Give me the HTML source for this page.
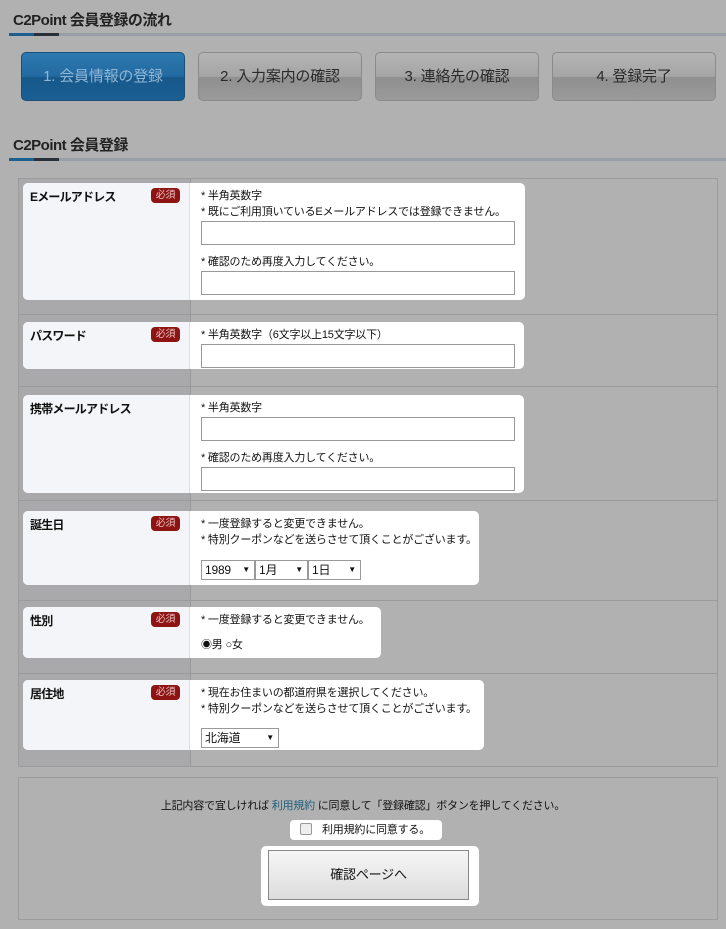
<!DOCTYPE html>
<html><head><meta charset="utf-8"><style>
*{margin:0;padding:0;box-sizing:border-box}
body{width:726px;height:929px;background:#b1b1b1;font-family:"Liberation Sans","Noto Sans CJK JP",sans-serif;font-size:11px;letter-spacing:-0.2px;color:#111;position:relative;overflow:hidden;white-space:nowrap}
.a{position:absolute}
h2{position:absolute;left:13px;font-size:15px;font-weight:bold;color:#222;letter-spacing:-0.5px}
.bar{position:absolute;left:9px;right:0;height:3px;background:#9a9ea6}
.bar:before{content:"";position:absolute;left:0;width:25px;height:3px;background:#1b5f8e}
.bar:after{content:"";position:absolute;left:25px;width:25px;height:3px;background:#2a2f3c}
.step{position:absolute;top:52px;width:164px;height:49px;border-radius:5px;border:1px solid #8a8a8a;background:linear-gradient(#b4b4b4,#a5a5a5 50%,#8f8f8f 52%,#9a9a9a);text-align:center;line-height:48px;font-size:15px;color:#2a2a2a}
.step.on{background:linear-gradient(#2d79b0,#236aa0 50%,#16588a 52%,#1b5f93);border-color:#1a4f78;color:#8fb6d6}
.tbl{position:absolute;left:18px;top:178px;width:700px;height:589px;border:1px solid #9c9c9c}
.lc{position:absolute;left:0;top:0;width:172px;height:100%;background:#a9a9ac;border-right:1px solid #999}
.line{position:absolute;left:0;right:0;height:1px;background:#9a9a9a}
.box{position:absolute;left:23px;border-radius:5px;background:#fff;overflow:hidden}
.box .l{position:absolute;left:0;top:0;bottom:0;width:167px;background:#f4f5f9;border-right:1px solid #dde}
.box .t{position:absolute;left:7px;top:5px;font-weight:bold;font-size:12px;letter-spacing:-0.8px}
.req{position:absolute;left:128px;top:5px;width:29px;height:15px;border-radius:4px;background:#8e1414;color:#e8c0c0;font-size:10px;text-align:center;line-height:15px}
.r{position:absolute;left:178px;top:5px;line-height:16px}
.in{width:314px;height:24px;border:1px solid #999;background:#fff;margin-top:1px}
.sel{display:inline-block;height:20px;border:1px solid #999;background:#fff;font-size:12px;line-height:18px;padding-left:3px;position:relative;vertical-align:top}
.sel:after{content:"▼";position:absolute;right:4px;top:0;font-size:8px}
</style></head><body>
<h2 style="top:9px">C2Point 会員登録の流れ</h2>
<div class="bar" style="top:33px"></div>
<div class="step on" style="left:21px">1. 会員情報の登録</div>
<div class="step" style="left:198px">2. 入力案内の確認</div>
<div class="step" style="left:375px">3. 連絡先の確認</div>
<div class="step" style="left:552px">4. 登録完了</div>
<h2 style="top:134px">C2Point 会員登録</h2>
<div class="bar" style="top:158px"></div>
<div class="tbl"><div class="lc"></div>
<div class="line" style="top:135px"></div><div class="line" style="top:207px"></div><div class="line" style="top:321px"></div><div class="line" style="top:421px"></div><div class="line" style="top:494px"></div>
</div>
<div class="box" style="top:183px;width:502px;height:117px"><div class="l"></div><div class="t">Eメールアドレス</div><div class="req">必須</div>
<div class="r">* 半角英数字<br>* 既にご利用頂いているEメールアドレスでは登録できません。<div class="in"></div><div style="margin-top:9px">* 確認のため再度入力してください。</div><div class="in"></div></div></div>
<div class="box" style="top:322px;width:501px;height:47px"><div class="l"></div><div class="t">パスワード</div><div class="req">必須</div>
<div class="r">* 半角英数字（6文字以上15文字以下）<div class="in"></div></div></div>
<div class="box" style="top:395px;width:501px;height:98px"><div class="l"></div><div class="t">携帯メールアドレス</div>
<div class="r">* 半角英数字<div class="in"></div><div style="margin-top:9px">* 確認のため再度入力してください。</div><div class="in"></div></div></div>
<div class="box" style="top:511px;width:456px;height:74px"><div class="l"></div><div class="t">誕生日</div><div class="req">必須</div>
<div class="r">* 一度登録すると変更できません。<br>* 特別クーポンなどを送らさせて頂くことがございます。<div style="margin-top:12px"><span class="sel" style="width:54px">1989</span><span class="sel" style="width:53px">1月</span><span class="sel" style="width:53px">1日</span></div></div></div>
<div class="box" style="top:607px;width:358px;height:51px"><div class="l"></div><div class="t">性別</div><div class="req">必須</div>
<div class="r">* 一度登録すると変更できません。<div style="margin-top:9px">◉男 ○女</div></div></div>
<div class="box" style="top:680px;width:461px;height:70px"><div class="l"></div><div class="t">居住地</div><div class="req">必須</div>
<div class="r">* 現在お住まいの都道府県を選択してください。<br>* 特別クーポンなどを送らさせて頂くことがございます。<div style="margin-top:11px"><span class="sel" style="width:78px">北海道</span></div></div></div>
<div class="a" style="left:18px;top:777px;width:700px;height:143px;border:1px solid #9c9c9c"></div>
<div class="a" style="left:0;width:726px;top:797px;text-align:center">上記内容で宜しければ <span style="color:#1f5f7a">利用規約</span> に同意して「登録確認」ボタンを押してください。</div>
<div class="a" style="left:290px;top:820px;width:152px;height:20px;background:#fff;border-radius:4px;line-height:20px;padding-left:10px"><span style="display:inline-block;width:12px;height:12px;border:1px solid #999;border-radius:2px;vertical-align:-2px;margin-right:10px;background:#eee"></span>利用規約に同意する。</div>
<div class="a" style="left:261px;top:846px;width:218px;height:60px;background:#fff;border-radius:5px"></div>
<div class="a" style="left:268px;top:850px;width:201px;height:50px;border:1px solid #888;background:linear-gradient(#f6f6f6,#dcdcdc);text-align:center;line-height:48px;font-size:13px">確認ページへ</div>
</body></html>
